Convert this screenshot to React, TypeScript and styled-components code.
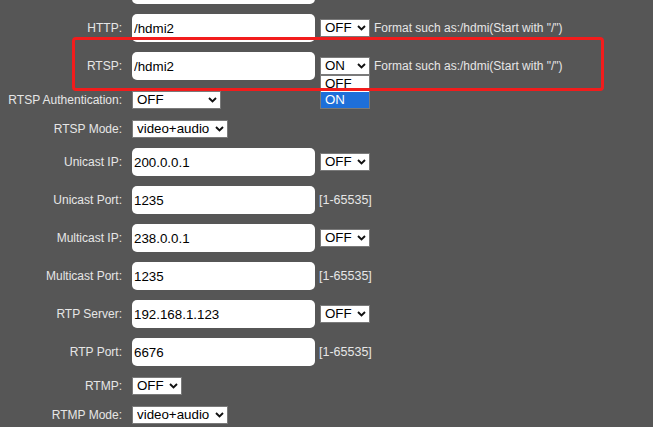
import React from "react";
import styled, { createGlobalStyle } from "styled-components";

const GlobalStyle = createGlobalStyle`
  html, body {
    margin: 0;
    padding: 0;
    background: #565656;
    font-family: "Liberation Sans", Arial, sans-serif;
    overflow: hidden;
  }
`;

const Page = styled.div`
  position: relative;
  width: 653px;
  height: 427px;
  overflow: hidden;
`;

const Form = styled.div`
  display: flex;
  flex-direction: column;
  gap: 10px;
  margin-top: -24px;
`;

const Row = styled.div`
  display: grid;
  grid-template-columns: 122px auto;
  column-gap: 10px;
  align-items: center;
  min-height: 19px;
`;

const Label = styled.label`
  text-align: right;
  font-size: 12px;
  color: #e6e6e6;
  white-space: nowrap;
`;

const Controls = styled.div`
  display: flex;
  align-items: center;
`;

const TextField = styled.input`
  box-sizing: border-box;
  width: 183px;
  height: 28px;
  border: 0;
  border-radius: 5px;
  padding: 0 2px;
  background: #fff;
  color: #000;
  font-family: "Liberation Sans", Arial, sans-serif;
  font-size: 13.33px;
  outline: none;
`;

const Extra = styled.div`
  display: flex;
  align-items: center;
  margin-left: 2px;
`;

const SelectWrap = styled.span<{ $offset?: number }>`
  position: relative;
  display: inline-flex;
  margin-left: ${(p) => p.$offset ?? 0}px;
`;

const SelectEl = styled.select<{ $width: number }>`
  appearance: none;
  -webkit-appearance: none;
  box-sizing: border-box;
  width: ${(p) => p.$width}px;
  height: 18px;
  border: 1px solid #7a7a7a;
  border-radius: 0;
  padding: 0 4px;
  margin: 0;
  background: #fff;
  color: #000;
  font-family: "Liberation Sans", Arial, sans-serif;
  font-size: 13.33px;
  line-height: 16px;
  outline: none;
`;

const Chevron = styled.svg`
  position: absolute;
  right: 4px;
  top: 6px;
  pointer-events: none;
`;

const Hint = styled.span`
  margin-left: 4px;
  font-size: 12px;
  color: #e6e6e6;
  white-space: nowrap;
`;

const Range = styled.span`
  margin-left: 2px;
  font-size: 12.5px;
  color: #e6e6e6;
  white-space: nowrap;
`;

const OptionList = styled.div`
  position: absolute;
  left: 0;
  top: 100%;
  box-sizing: border-box;
  width: 100%;
  border: 1px solid #7a7a7a;
  background: #fff;
  z-index: 5;
`;

const OptionItem = styled.div<{ $active?: boolean }>`
  height: 16px;
  line-height: 16px;
  padding-left: 4px;
  font-size: 13.33px;
  color: ${(p) => (p.$active ? "#fff" : "#000")};
  background: ${(p) => (p.$active ? "#1e6fd9" : "#fff")};
`;

const Highlight = styled.div`
  position: absolute;
  left: 72px;
  top: 37px;
  width: 532px;
  height: 54px;
  box-sizing: border-box;
  border: 3px solid #f21c1c;
  border-radius: 4px;
  pointer-events: none;
  z-index: 10;
`;

type SelectProps = {
  value: string;
  options: string[];
  width: number;
  offset?: number;
  open?: boolean;
};

function Select({ value, options, width, offset, open }: SelectProps) {
  return (
    <SelectWrap $offset={offset}>
      <SelectEl $width={width} value={value} onChange={() => {}}>
        {options.map((o) => (
          <option key={o} value={o}>
            {o}
          </option>
        ))}
      </SelectEl>
      <Chevron width="9" height="6" viewBox="0 0 9 6">
        <path d="M1 1 L4.5 4.5 L8 1" fill="none" stroke="#111" strokeWidth="1.9" />
      </Chevron>
      {open && (
        <OptionList>
          {options.map((o) => (
            <OptionItem key={o} $active={o === value}>
              {o}
            </OptionItem>
          ))}
        </OptionList>
      )}
    </SelectWrap>
  );
}

const onOff = ["OFF", "ON"];
const modes = ["video+audio", "video", "audio"];
const auth = ["OFF", "Basic", "Digest", "Basic+Dig"];
const hint = 'Format such as:/hdmi(Start with "/")';

export default function App() {
  return (
    <Page>
      <GlobalStyle />
      <Form>
        <Row>
          <Label />
          <Controls>
            <TextField value="" readOnly />
          </Controls>
        </Row>
        <Row>
          <Label>HTTP:</Label>
          <Controls>
            <TextField value="/hdmi2" readOnly />
            <Extra>
              <Select value="OFF" options={onOff} width={50} offset={3} />
              <Hint>{hint}</Hint>
            </Extra>
          </Controls>
        </Row>
        <Row>
          <Label>RTSP:</Label>
          <Controls>
            <TextField value="/hdmi2" readOnly />
            <Extra>
              <Select value="ON" options={onOff} width={50} offset={3} open />
              <Hint>{hint}</Hint>
            </Extra>
          </Controls>
        </Row>
        <Row>
          <Label>RTSP Authentication:</Label>
          <Controls>
            <Select value="OFF" options={auth} width={89} />
          </Controls>
        </Row>
        <Row>
          <Label>RTSP Mode:</Label>
          <Controls>
            <Select value="video+audio" options={modes} width={96} />
          </Controls>
        </Row>
        <Row>
          <Label>Unicast IP:</Label>
          <Controls>
            <TextField value="200.0.0.1" readOnly />
            <Extra>
              <Select value="OFF" options={onOff} width={50} offset={3} />
            </Extra>
          </Controls>
        </Row>
        <Row>
          <Label>Unicast Port:</Label>
          <Controls>
            <TextField value="1235" readOnly />
            <Extra>
              <Range>[1-65535]</Range>
            </Extra>
          </Controls>
        </Row>
        <Row>
          <Label>Multicast IP:</Label>
          <Controls>
            <TextField value="238.0.0.1" readOnly />
            <Extra>
              <Select value="OFF" options={onOff} width={50} offset={3} />
            </Extra>
          </Controls>
        </Row>
        <Row>
          <Label>Multicast Port:</Label>
          <Controls>
            <TextField value="1235" readOnly />
            <Extra>
              <Range>[1-65535]</Range>
            </Extra>
          </Controls>
        </Row>
        <Row>
          <Label>RTP Server:</Label>
          <Controls>
            <TextField value="192.168.1.123" readOnly />
            <Extra>
              <Select value="OFF" options={onOff} width={50} offset={3} />
            </Extra>
          </Controls>
        </Row>
        <Row>
          <Label>RTP Port:</Label>
          <Controls>
            <TextField value="6676" readOnly />
            <Extra>
              <Range>[1-65535]</Range>
            </Extra>
          </Controls>
        </Row>
        <Row>
          <Label>RTMP:</Label>
          <Controls>
            <Select value="OFF" options={onOff} width={50} />
          </Controls>
        </Row>
        <Row>
          <Label>RTMP Mode:</Label>
          <Controls>
            <Select value="video+audio" options={modes} width={96} />
          </Controls>
        </Row>
      </Form>
      <Highlight />
    </Page>
  );
}
